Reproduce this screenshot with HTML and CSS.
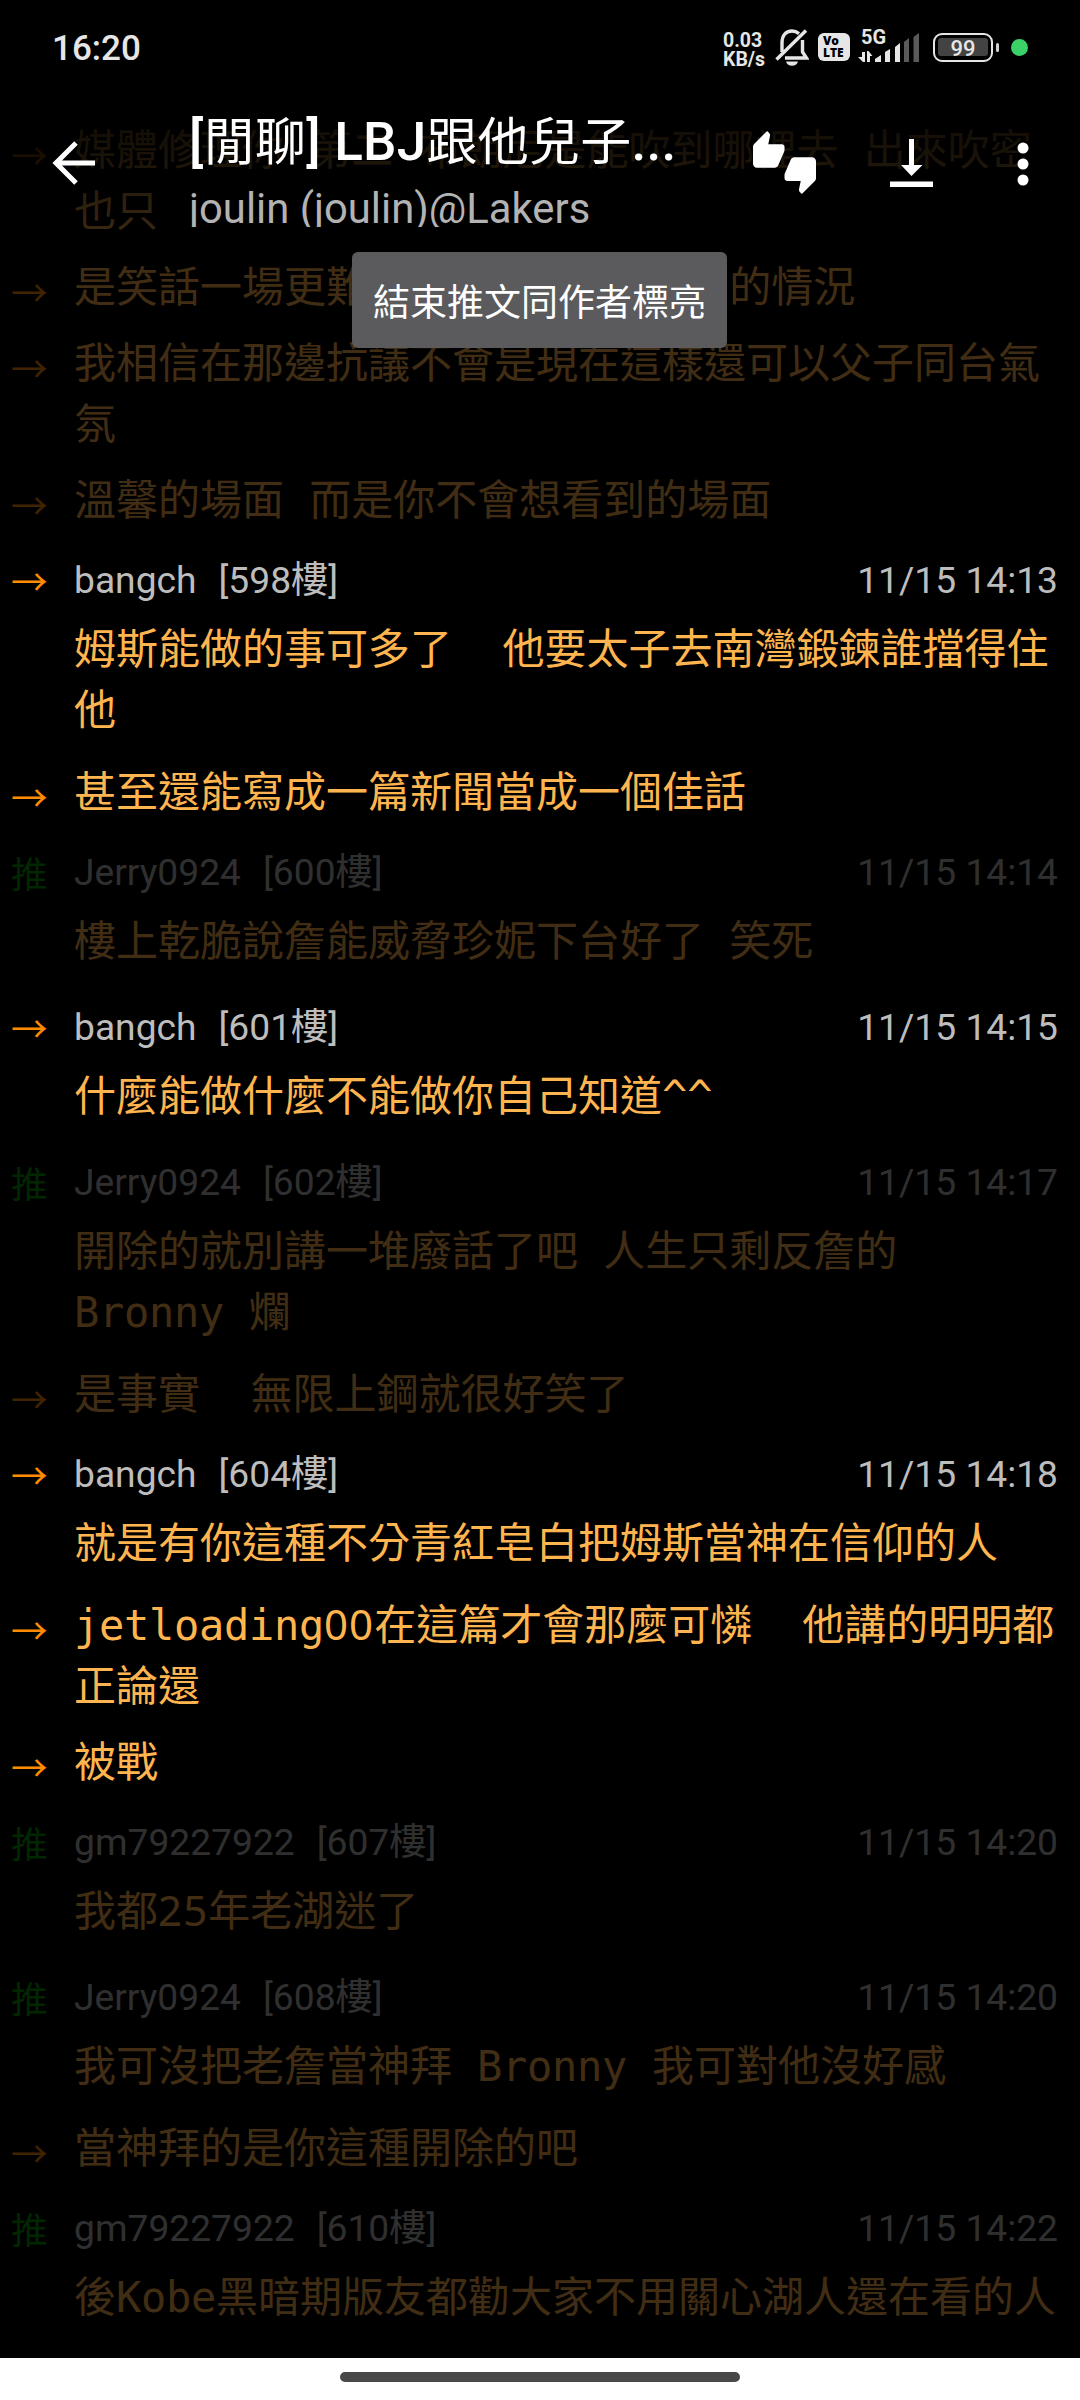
FILE: index.html
```
<!DOCTYPE html>
<html lang="zh-Hant">
<head>
<meta charset="utf-8">
<title>[閒聊] LBJ跟他兒子...</title>
<link rel="stylesheet" href="styles.css">
</head>
<body>
<div class="screen">
  <header class="top">
    <div class="status">
      <span class="clock">16:20</span>
      <span class="speed"><span>0.03</span><span>KB/s</span></span>
      <svg class="bell" width="34" height="38" viewBox="0 0 34 38" fill="none" stroke="#e6e6e6" stroke-width="3.4">
        <path d="M7 24V15C7 7 11 3 17 3c3 0 5 1 7 2.6M27.500 12v12l4 6H10"/>
        <path d="M1.500 31.500 31 2.500"/>
        <path d="M11 33.500h12c-1 3.200-3 4.200-6 4.200s-5-1-6-4.200z" fill="#e6e6e6" stroke="none"/>
      </svg>
      <span class="volte"><span>Vo</span><span>LTE</span></span>
      <span class="signal">
        <span class="net">5G</span>
        <svg width="62" height="34" viewBox="0 0 62 34" fill="#e6e6e6">
          <path d="M4 18h3v10H5L0 23h4zM9 28V17h1.500l4 5H12v6z"/>
          <path d="M17 28v-3l6-4v7zM27 28V18l5-3v13zM37 28V13l5-4v19z"/>
          <path d="M46 28V8l5-4v24zM55.500 28V3l5.500-4v29z" fill="#5a5a5a"/>
        </svg>
      </span>
      <span class="battery"><span class="level">99</span></span>
      <span class="nub"></span>
      <span class="dot"></span>
    </div>
    <div class="bar">
      <svg class="back" width="44" height="44" viewBox="0 0 44 44" fill="none" stroke="#fff" stroke-width="5"><path d="M43 22H4M24 2 4 22l20 20"/></svg>
      <div class="titles">
        <h1>[<span class="cjk">閒聊</span>] LBJ<span class="cjk">跟他兒子</span>...</h1>
        <p>joulin (joulin)@Lakers</p>
      </div>
      <svg class="thumbs" width="63" height="63" viewBox="0 0 24 24" fill="#fff"><path d="M12 6c0-.550-.450-1-1-1H5.820l.660-3.180.020-.230c0-.310-.130-.590-.330-.800L5.380 0 .440 4.940C.170 5.210 0 5.590 0 6v6.500c0 .830.670 1.500 1.500 1.500h6.750c.620 0 1.150-.380 1.380-.910l2.260-5.290c.070-.170.110-.360.110-.550V6zm10.500 4h-6.750c-.620 0-1.150.380-1.380.910l-2.260 5.290c-.070.170-.110.360-.110.550V18c0 .550.450 1 1 1h5.180l-.660 3.180-.020.240c0 .310.130.590.330.800l.790.780 4.940-4.940c.270-.270.440-.650.440-1.060v-6.500c0-.830-.670-1.500-1.500-1.500z"/></svg>
      <svg class="down" width="43" height="48" viewBox="0 0 43 48" fill="#fff"><path d="M19 0h5v26h8.500L21.500 37 11 26h8zM0 42.500h43V48H0z"/></svg>
      <svg class="more" width="12" height="44" viewBox="0 0 12 44" fill="#fff"><circle cx="6" cy="6" r="5.500"/><circle cx="6" cy="22" r="5.500"/><circle cx="6" cy="38" r="5.500"/></svg>
    </div>
  </header>

  <main class="list">
    <article class="item dim"><span class="tag">→</span><p>媒體修理你 第二 布朗尼是能吹到哪裡去 出來吹密<br>也只</p></article>
    <article class="item dim"><span class="tag">→</span><p>是笑話一場更難想像會發生什麼樣 的情況</p></article>
    <article class="item dim"><span class="tag">→</span><p>我相信在那邊抗議不會是現在這樣還可以父子同台氣<br>氛</p></article>
    <article class="item dim"><span class="tag">→</span><p>溫馨的場面 而是你不會想看到的場面</p></article>
    <article class="item full"><span class="tag">→</span><div class="meta"><span>bangch</span><span>[598樓]</span><time>11/15 14:13</time></div><p>姆斯能做的事可多了  他要太子去南灣鍛鍊誰擋得住<br>他</p></article>
    <article class="item"><span class="tag">→</span><p>甚至還能寫成一篇新聞當成一個佳話</p></article>
    <article class="item full dim"><span class="tag push">推</span><div class="meta"><span>Jerry0924</span><span>[600樓]</span><time>11/15 14:14</time></div><p>樓上乾脆說詹能威脅珍妮下台好了 笑死</p></article>
    <article class="item full"><span class="tag">→</span><div class="meta"><span>bangch</span><span>[601樓]</span><time>11/15 14:15</time></div><p>什麼能做什麼不能做你自己知道^^</p></article>
    <article class="item full dim"><span class="tag push">推</span><div class="meta"><span>Jerry0924</span><span>[602樓]</span><time>11/15 14:17</time></div><p>開除的就別講一堆廢話了吧 人生只剩反詹的<br><span class="lat">Bronny </span>爛</p></article>
    <article class="item dim"><span class="tag">→</span><p>是事實  無限上鋼就很好笑了</p></article>
    <article class="item full"><span class="tag">→</span><div class="meta"><span>bangch</span><span>[604樓]</span><time>11/15 14:18</time></div><p>就是有你這種不分青紅皂白把姆斯當神在信仰的人</p></article>
    <article class="item"><span class="tag">→</span><p><span class="lat">jetloading</span><span class="num">00</span>在這篇才會那麼可憐<span class="lat">  </span>他講的明明都<br>正論還</p></article>
    <article class="item"><span class="tag">→</span><p>被戰</p></article>
    <article class="item full dim"><span class="tag push">推</span><div class="meta"><span>gm79227922</span><span>[607樓]</span><time>11/15 14:20</time></div><p>我都<span class="num">25</span>年老湖迷了</p></article>
    <article class="item full dim"><span class="tag push">推</span><div class="meta"><span>Jerry0924</span><span>[608樓]</span><time>11/15 14:20</time></div><p>我可沒把老詹當神拜<span class="lat"> Bronny </span>我可對他沒好感</p></article>
    <article class="item dim"><span class="tag">→</span><p>當神拜的是你這種開除的吧</p></article>
    <article class="item full dim"><span class="tag push">推</span><div class="meta"><span>gm79227922</span><span>[610樓]</span><time>11/15 14:22</time></div><p>後<span class="lat">Kobe</span>黑暗期版友都勸大家不用關心湖人還在看的人</p></article>
  </main>

  <div class="toast">結束推文同作者標亮</div>
  <footer class="nav"><span></span></footer>
</div>
</body>
</html>
```
FILE: styles.css
```
* { box-sizing: border-box; margin: 0; padding: 0; }
body { background: #000; }
.screen {
  position: relative;
  display: flex;
  flex-direction: column;
  width: 1080px;
  height: 2400px;
  overflow: hidden;
  background: #000;
  font-family: Roboto, "Noto Sans CJK TC", sans-serif;
}

/* header floats over the scrolling list */
.top {
  position: absolute;
  inset: 0 0 auto 0;
  z-index: 2;
  height: 250px;
  color: #fff;
  background: linear-gradient(#000 30px, rgba(0, 0, 0, .6) 155px, rgba(0, 0, 0, 0) 250px);
}
.status { display: flex; height: 96px; padding: 0 52px 0 52px; color: #e6e6e6; }
.clock { flex: 1; padding-top: 27px; font-size: 35px; line-height: 44px; font-weight: 500; }
.speed { display: flex; flex-direction: column; width: 53px; padding-top: 31px; font-size: 19.500px; line-height: 19px; font-weight: 700; }
.bell { margin: 28px 0 0 -1px; }
.volte {
  display: flex;
  flex-direction: column;
  width: 32px;
  height: 28px;
  margin: 33px 0 0 9px;
  padding: 2px 0 0 5px;
  border-radius: 6px;
  background: #e6e6e6;
  color: #000;
  font: 800 12px/12px "Open Sans", sans-serif;
}
.signal { width: 62px; height: 40px; margin: 28px 0 0 8px; }
.signal svg { display: block; margin-top: -12px; overflow: visible; }
.net { display: block; height: 18px; padding-left: 3px; font-size: 20px; line-height: 18px; font-weight: 700; }
.battery { width: 60px; height: 29px; margin: 33px 0 0 13px; padding: 3px; border: 2.500px solid #e6e6e6; border-radius: 9px; }
.level { display: block; height: 18px; border-radius: 3px; background: #434343; text-align: center; font-size: 22px; line-height: 22px; font-weight: 500; }
.nub { width: 3px; height: 9px; margin: 43px 12px 0 3px; border-radius: 2px; background: #d0d0d0; }
.dot { width: 17px; height: 17px; margin-top: 39px; border-radius: 50%; background: #3ad168; }

.bar { display: flex; height: 154px; padding: 0 51px 0 52px; }
.back { margin-top: 45px; }
.titles { width: 500px; height: 131px; margin-left: 93px; overflow: hidden; white-space: nowrap; }
h1 { margin-top: 14px; font-size: 53px; line-height: 64px; font-weight: 500; letter-spacing: .250px; }
.cjk { font-size: 51px; font-weight: 400; line-height: 1px; }
.titles p { margin-top: 11px; font-size: 41.800px; line-height: 48px; color: #b3b3b3; }
.thumbs { margin: 35px 0 0 64px; }
.down { margin: 43px 0 0 74px; }
.more { margin: 46px 0 0 auto; }

.list { padding-top: 119.500px; }
.item { display: grid; grid-template-columns: 74px 1fr; min-height: 76px; padding-bottom: 15px; padding-right: 22px; }
.item p { grid-column: 2; font: 42px/61px "DejaVu Sans Mono", "Noto Sans CJK TC", monospace; color: #ffb54f; white-space: pre; }
.tag { grid-column: 1; height: 61px; padding-left: 11px; font: 36.750px/69px "Noto Sans CJK TC", sans-serif; color: #ff8c00; }
.push { color: #009a00; }
.lat { letter-spacing: -.300px; }
.num { font-family: "Noto Sans", sans-serif; letter-spacing: 1.100px; line-height: 1px; }
.full { grid-template-rows: 73px auto; padding-bottom: 21px; }
.full p { grid-row: 2; }
.meta { display: flex; height: 61px; font-size: 37.200px; line-height: 69px; color: #bdbdbd; }
.meta span + span { margin-left: 22px; }
.meta time { margin-left: auto; }
.dim > * { opacity: .25; }

.toast {
  position: absolute;
  top: 252px;
  left: 352px;
  z-index: 3;
  width: 375px;
  height: 96px;
  border-radius: 6px;
  background: #5b5b5d;
  color: #fff;
  text-align: center;
  font: 37px/96px "Noto Sans CJK TC", sans-serif;
}
.nav { position: absolute; inset: auto 0 0 0; z-index: 1; display: flex; justify-content: center; height: 42px; background: #fff; }
.nav span { width: 400px; height: 10px; margin-top: 14px; border-radius: 5px; background: #484848; }
```
